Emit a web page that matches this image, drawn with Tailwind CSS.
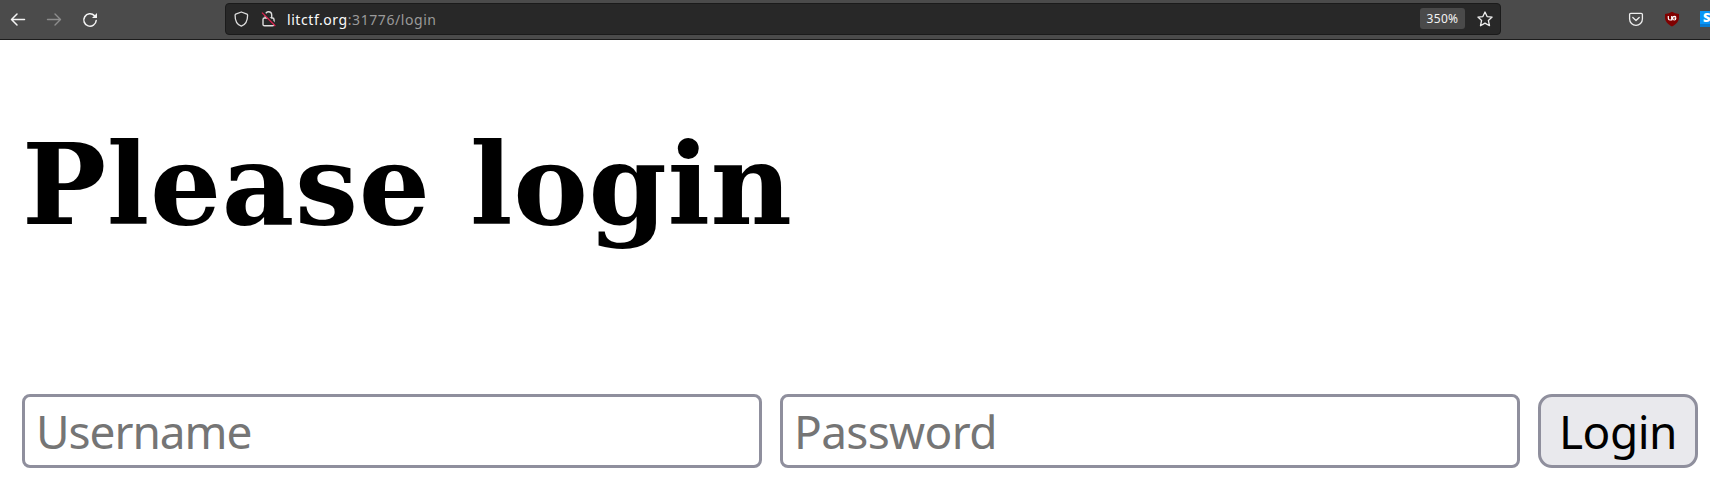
<!DOCTYPE html>
<html lang="en">
<head>
<meta charset="utf-8">
<title>Login</title>
<script src="https://cdn.jsdelivr.net/npm/@tailwindcss/browser@4"></script>
</head>
<body class="bg-white w-[1710px] h-[500px] overflow-hidden font-['Noto_Sans',sans-serif]">
<header class="h-10 bg-[#4b4b4b] border-b border-[#1c1c1c] flex items-start text-[#f4f4f4] overflow-hidden">
  <nav class="flex w-[225px] shrink-0 pl-[10px] pt-3 gap-5">
    <svg class="size-4" viewBox="0 0 16 16" fill="none" stroke="currentColor" stroke-width="1.5" stroke-linecap="round" stroke-linejoin="round"><path d="M14.5 7.5H1.8M7 2L1.5 7.5L7 13"/></svg>
    <svg class="size-4 text-[#8d8d8d]" viewBox="0 0 16 16" fill="none" stroke="currentColor" stroke-width="1.4" stroke-linecap="round" stroke-linejoin="round"><path d="M1.5 7.5H14.2M9 2L14.5 7.5L9 13"/></svg>
    <svg class="size-4" viewBox="0 0 16 16"><path d="M12.4 3.6A6.2 6.2 0 1 0 14.2 8.5" fill="none" stroke="currentColor" stroke-width="1.5" stroke-linecap="round"/><path d="M15 .9V5.5Q15 6 14.5 6H10Z" fill="currentColor"/></svg>
  </nav>
  <div class="mt-[3px] w-[1276px] h-8 shrink-0 rounded bg-[#282828] border border-[#1b1b1b] flex items-center pl-2 pr-[7px]">
    <svg class="size-4 mb-px" viewBox="0 0 16 16" fill="none" stroke="#dedede" stroke-width="1.3" stroke-linejoin="round"><path d="M7.3 1L1.7 3.2Q1.1 3.5 1.1 4.2C1 9.5 3.2 13.7 7.3 15.2C11.4 13.7 13.6 9.5 13.6 4.2Q13.6 3.5 13 3.2Z"/></svg>
    <svg class="size-4 ml-[11px] mb-px" viewBox="0 0 16 16" fill="none"><path d="M4.3 7V3.9a3.2 3.2 0 0 1 6.4 0V7M3.5 7h8Q13 7 13 8.5v4.9Q13 14.8 11.5 14.8h-8Q2 14.8 2 13.4V8.5Q2 7 3.5 7Z" stroke="#dedede" stroke-width="1.4"/><path d="M2 1L15.4 14.4" stroke="#282828" stroke-width="2"/><path d="M1 1.7L14.3 15" stroke="#df1f4d" stroke-width="1.2"/></svg>
    <div class="ml-[10px] pt-px text-[14px] leading-none tracking-[0.57px] whitespace-pre text-[#9a9a9a]"><span class="text-[#fafafa]">litctf.org</span>:31776/login</div>
    <div class="ml-auto mb-px h-[21px] w-[45px] rounded-[3px] bg-[#4a4a4a] text-[12px] leading-[22px] tracking-[0.3px] text-center text-[#f2f2f2]">350%</div>
    <svg class="size-4 ml-3 mb-px" viewBox="0 0 16 16" fill="none" stroke="#eeeeee" stroke-width="1.3" stroke-linejoin="round"><path d="M8 1L10.1 5.6L15.1 6.1L11.4 9.5L12.5 14.7L8 12.1L3.5 14.7L4.6 9.5L.9 6.1L5.9 5.6Z"/></svg>
  </div>
  <div class="flex pl-[127px] pt-[11px]">
    <svg class="size-4 shrink-0" viewBox="0 0 16 16" fill="none" stroke="#eeeeee" stroke-width="1.3" stroke-linecap="round" stroke-linejoin="round"><path d="M2.8 2.4H13.2Q14.4 2.4 14.4 3.6V7.9A6.4 6.4 0 0 1 1.6 7.9V3.6Q1.6 2.4 2.8 2.4ZM4.8 6.5L8 9.5L11.2 6.5"/></svg>
    <svg class="size-4 shrink-0 ml-5" viewBox="0 0 16 16" fill="none"><path d="M8 .7Q10.8 2.8 15 2.9V6.5C15 10.5 12 13.5 8 15.4C4 13.5 1 10.5 1 6.5V2.9Q5.2 2.8 8 .7Z" fill="#800000"/><path d="M4.3 5V7.2Q4.3 9 6 9H7.7V5M11.8 6.2Q11.5 5.4 10.4 5.4Q8.7 5.4 8.7 7.2Q8.7 9 10.4 9Q11.8 9 11.8 7.2H10.4" stroke="white" stroke-width="1.2"/></svg>
    <div class="ml-[20px] w-4 h-4 shrink-0 bg-[#0879cf]"><div class="h-[13px] bg-[#0996f8] text-white text-[13px] leading-[13px] font-black font-['Open_Sans',sans-serif] pl-[3px]">S</div></div>
  </div>
</header>
<main class="pl-[22px] pt-[80px]">
  <h1 class="font-['DejaVu_Serif',serif] font-bold text-[112px] leading-[130px] tracking-[0.6px] text-black whitespace-nowrap">Please login</h1>
  <form class="mt-[144px] flex gap-[18px] text-[46px]">
    <input type="text" placeholder="Username" class="w-[740px] h-[74px] border-[3px] border-[#8f8f9d] rounded-[8px] bg-white pl-[11px] pb-[1px] leading-[68px] placeholder:text-[#757575] tracking-[-1.05px]">
    <input type="password" placeholder="Password" class="w-[740px] h-[74px] border-[3px] border-[#8f8f9d] rounded-[8px] bg-white pl-[11px] pb-[1px] leading-[68px] placeholder:text-[#757575] tracking-[-0.65px]">
    <button type="button" class="w-[160px] h-[74px] border-[3px] border-[#8f8f9d] rounded-[14px] bg-[#e9e9ed] text-black leading-[66px] tracking-[-0.5px]">Login</button>
  </form>
</main>
</body>
</html>
